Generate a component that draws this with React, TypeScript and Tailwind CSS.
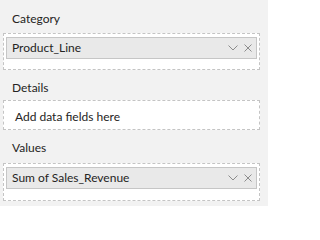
import React from "react";

const font = { fontFamily: 'Lato, "Noto Sans", sans-serif' };

const Chevron = () => (
  <svg width="10" height="6" viewBox="0 0 10 6" fill="none" stroke="#8c8c8c" strokeWidth="1">
    <path d="M0.5 0.5 L5 5 L9.5 0.5" />
  </svg>
);

const Close = () => (
  <svg width="8" height="8" viewBox="0 0 8 8" fill="none" stroke="#8c8c8c" strokeWidth="1">
    <path d="M0.5 0.5 L7.5 7.5 M7.5 0.5 L0.5 7.5" />
  </svg>
);

// chip for a field dropped into the well
const Pill = ({ label }: { label: string }) => (
  <div className="mx-[2px] mt-[3px] flex h-[22px] items-center border border-[#c6c6c6] bg-[#e9e9e9] pl-[5px] pr-[4px]">
    <span className="flex-1 truncate text-[12px] leading-[16px] text-[#252423]">{label}</span>
    <div className="flex items-center gap-[6px]">
      <Chevron />
      <Close />
    </div>
  </div>
);

const Label = ({ text, cls }: { text: string; cls: string }) => (
  <div className={`pl-[12px] text-[12px] leading-[16px] text-[#252423] ${cls}`}>{text}</div>
);

export default function App() {
  return (
    <div className="h-[206px] w-[268px] overflow-hidden bg-[#f2f2f2]" style={font}>
      <Label text="Category" cls="h-[33px] pt-[11px]" />
      <div className="ml-[3px] h-[37px] w-[257px] border border-dashed border-[#c4c4c4] bg-white">
        <Pill label="Product_Line" />
      </div>
      <Label text="Details" cls="h-[30px] pt-[10px]" />
      <div className="ml-[3px] flex h-[30px] w-[257px] items-center border border-dashed border-[#c4c4c4] bg-white pl-[11px] pt-[3px]">
        <span className="text-[12px] leading-[16px] text-[#252423]">Add data fields here</span>
      </div>
      <Label text="Values" cls="h-[33px] pt-[10px]" />
      <div className="ml-[3px] h-[38px] w-[257px] border border-dashed border-[#c4c4c4] bg-white">
        <Pill label="Sum of Sales_Revenue" />
      </div>
    </div>
  );
}
